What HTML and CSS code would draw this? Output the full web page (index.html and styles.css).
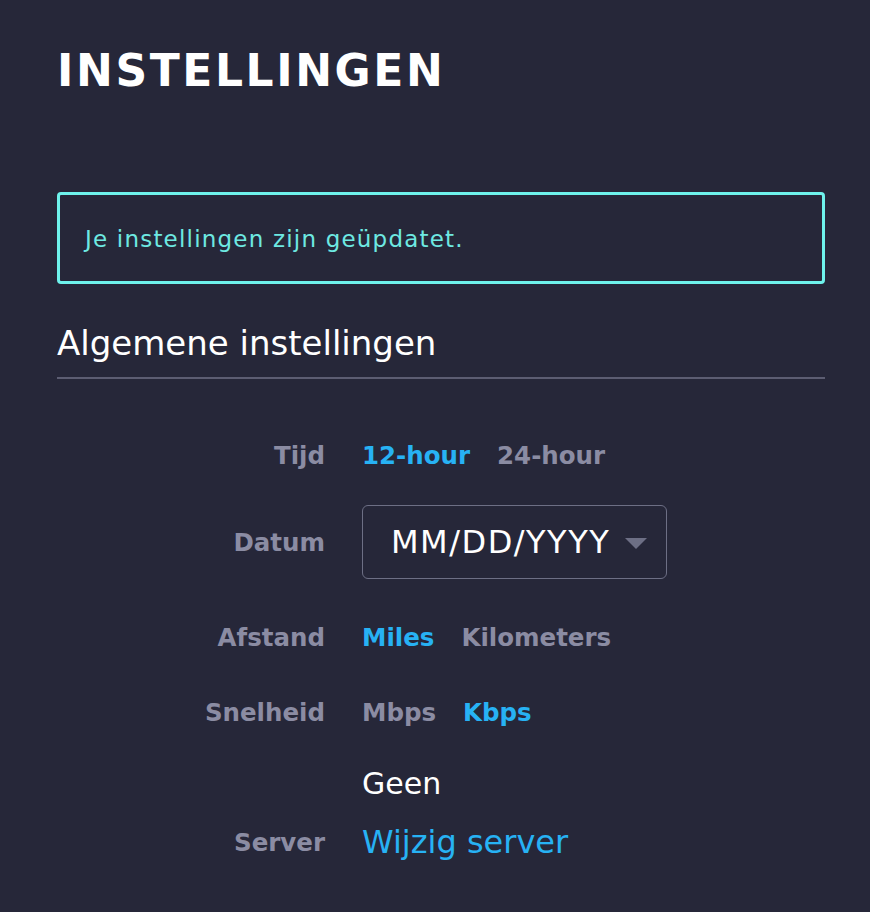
FILE: index.html
```html
<!DOCTYPE html>
<html lang="nl">
<head>
<meta charset="utf-8">
<title>Instellingen</title>
<link rel="stylesheet" href="styles.css">
</head>
<body>
<main class="page">
  <h1 class="title">INSTELLINGEN</h1>
  <div class="alert">Je instellingen zijn geüpdatet.</div>
  <h2 class="section">Algemene instellingen</h2>
  <div class="form">
    <div class="row row-tijd">
      <span class="label">Tijd</span>
      <div class="values">
        <span class="opt active">12-hour</span>
        <span class="opt">24-hour</span>
      </div>
    </div>
    <div class="row row-datum">
      <span class="label">Datum</span>
      <div class="values">
        <div class="select">
          <span class="select-text">MM/DD/YYYY</span>
          <span class="caret"></span>
        </div>
      </div>
    </div>
    <div class="row row-afstand">
      <span class="label">Afstand</span>
      <div class="values">
        <span class="opt active">Miles</span>
        <span class="opt">Kilometers</span>
      </div>
    </div>
    <div class="row row-snelheid">
      <span class="label">Snelheid</span>
      <div class="values">
        <span class="opt">Mbps</span>
        <span class="opt active">Kbps</span>
      </div>
    </div>
    <div class="row row-server">
      <span class="label">Server</span>
      <div class="values server-values">
        <span class="server-name">Geen</span>
        <span class="server-link">Wijzig server</span>
      </div>
    </div>
  </div>
</main>
</body>
</html>
```

FILE: styles.css
```css
html, body {
  margin: 0;
  padding: 0;
  background: #262739;
}
body {
  font-family: "DejaVu Sans", "Open Sans", sans-serif;
  color: #ffffff;
  width: 870px;
  height: 912px;
  overflow: hidden;
}
.page {
  padding: 0 45px 0 57px;
}
.title {
  margin: 0;
  padding-top: 43px;
  font-size: 44px;
  line-height: 56px;
  font-weight: 700;
  letter-spacing: 2.6px;
  color: #ffffff;
}
.alert {
  margin-top: 93px;
  height: 92px;
  box-sizing: border-box;
  border: 3px solid #6ef2ec;
  border-radius: 4px;
  padding: 2px 25px 0;
  display: flex;
  align-items: center;
  color: #6ee9e2;
  font-size: 23px;
  letter-spacing: 1.2px;
  font-weight: 400;
}
.section {
  margin: 0;
  margin-top: 38px;
  padding-bottom: 13px;
  border-bottom: 2px solid #5c5d72;
  font-size: 34px;
  line-height: 42px;
  font-weight: 400;
  color: #ffffff;
}
.form {
  padding-top: 60px;
  display: flex;
  flex-direction: column;
}
.row {
  display: flex;
  align-items: center;
}
.label {
  width: 268px;
  text-align: right;
  color: #8b8ca3;
  font-size: 24.5px;
  font-weight: 700;
  flex: none;
}
.values {
  margin-left: 37px;
  display: flex;
  align-items: center;
  gap: 27px;
}
.opt {
  font-size: 24.5px;
  font-weight: 700;
  color: #8b8ca3;
}
.opt.active {
  color: #27b2f4;
}
.row-tijd { height: 32px; }
.row-datum { margin-top: 34px; }
.row-afstand { margin-top: 42px; height: 32px; }
.row-snelheid { margin-top: 43px; height: 32px; }
.select {
  width: 305px;
  height: 74px;
  box-sizing: border-box;
  border: 1.5px solid #6d6f85;
  border-radius: 6px;
  display: flex;
  align-items: center;
  padding-left: 28px;
  padding-right: 14px;
  gap: 15px;
}
.select-text {
  font-size: 32px;
  letter-spacing: 1.5px;
  font-weight: 400;
  color: #ffffff;
}
.caret {
  width: 0;
  height: 0;
  margin-top: 2px;
  border-left: 11px solid transparent;
  border-right: 11px solid transparent;
  border-top: 11px solid #6d6f85;
}
.row-server {
  margin-top: 38px;
  align-items: flex-end;
}
.row-server .label {
  padding-bottom: 4px;
}
.server-values {
  flex-direction: column;
  align-items: flex-start;
  gap: 21px;
}
.server-name {
  font-size: 30px;
  line-height: 36px;
  font-weight: 400;
  color: #ffffff;
}
.server-link {
  font-size: 32px;
  line-height: 38px;
  font-weight: 400;
  color: #27b2f4;
}
```
